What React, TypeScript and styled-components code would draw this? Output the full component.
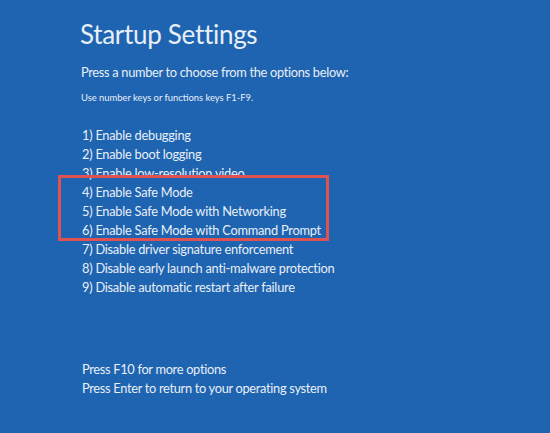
import React from 'react'
import styled, { createGlobalStyle } from 'styled-components'

const GlobalStyle = createGlobalStyle`
  html, body {
    margin: 0;
    padding: 0;
    background: #1e64b0;
  }
  body {
    font-family: Lato, 'Open Sans', sans-serif;
    color: #e9eff7;
  }
`

// Style
const Screen = styled.div`
  width: 550px;
  height: 433px;
  box-sizing: border-box;
  padding: 18px 0 0 80px;
  background: #1e64b0;
  overflow: hidden;
`

const Title = styled.h1`
  margin: 0;
  font-size: 26px;
  line-height: 32px;
  font-weight: 400;
  letter-spacing: -0.3px;
`

const Prompt = styled.p`
  margin: 13px 0 0 1px;
  font-size: 12.8px;
  line-height: 18px;
  letter-spacing: -0.3px;
`

const Hint = styled.p`
  margin: 10px 0 0 1px;
  font-size: 9.4px;
  line-height: 14px;
`

const OptionList = styled.ol`
  position: relative;
  list-style: none;
  margin: 21px 0 0 2px;
  padding: 0;
`

const Option = styled.li`
  font-size: 12.8px;
  line-height: 19px;
  letter-spacing: -0.25px;
  white-space: nowrap;
`

const Highlight = styled.div`
  position: absolute;
  left: -24px;
  top: 49px;
  width: 271px;
  height: 66px;
  box-sizing: border-box;
  border: 3px solid #e05252;
  pointer-events: none;
`

const Footer = styled.div`
  margin: 63px 0 0 2px;
`

const FooterLine = styled.div`
  font-size: 12.8px;
  line-height: 19px;
  letter-spacing: -0.3px;
`

const options = [
  'Enable debugging',
  'Enable boot logging',
  'Enable low-resolution video',
  'Enable Safe Mode',
  'Enable Safe Mode with Networking',
  'Enable Safe Mode with Command Prompt',
  'Disable driver signature enforcement',
  'Disable early launch anti-malware protection',
  'Disable automatic restart after failure',
]

// Component
const App = () => {
  return (
    <>
      <GlobalStyle />
      <Screen>
        <Title>Startup Settings</Title>
        <Prompt>Press a number to choose from the options below:</Prompt>
        <Hint>Use number keys or functions keys F1-F9.</Hint>
        <OptionList>
          {options.map((label, i) => (
            <Option key={label}>
              {i + 1}) {label}
            </Option>
          ))}
          <Highlight />
        </OptionList>
        <Footer>
          <FooterLine>Press F10 for more options</FooterLine>
          <FooterLine>Press Enter to return to your operating system</FooterLine>
        </Footer>
      </Screen>
    </>
  )
}

export default App
